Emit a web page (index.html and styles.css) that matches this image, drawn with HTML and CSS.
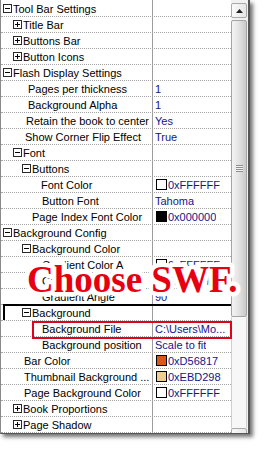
FILE: index.html
```html
<!DOCTYPE html>
<html>
<head>
<meta charset="utf-8">
<link rel="stylesheet" href="styles.css">
</head>
<body>
<div class="panel">
  <div class="grid">
    <div class="row"><div class="name l0"><svg class="box" width="9" height="9"><rect x=".5" y=".5" width="8" height="8"/><path d="M2 4.5h5"/></svg>Tool Bar Settings</div><div class="val"></div></div>
    <div class="row"><div class="name l1"><svg class="box" width="9" height="9"><rect x=".5" y=".5" width="8" height="8"/><path d="M2 4.5h5M4.5 2v5"/></svg>Title Bar</div><div class="val"></div></div>
    <div class="row"><div class="name l1"><svg class="box" width="9" height="9"><rect x=".5" y=".5" width="8" height="8"/><path d="M2 4.5h5M4.5 2v5"/></svg>Buttons Bar</div><div class="val"></div></div>
    <div class="row"><div class="name l1"><svg class="box" width="9" height="9"><rect x=".5" y=".5" width="8" height="8"/><path d="M2 4.5h5M4.5 2v5"/></svg>Button Icons</div><div class="val"></div></div>
    <div class="row"><div class="name l0"><svg class="box" width="9" height="9"><rect x=".5" y=".5" width="8" height="8"/><path d="M2 4.5h5"/></svg>Flash Display Settings</div><div class="val"></div></div>
    <div class="row"><div class="name t27">Pages per thickness</div><div class="val">1</div></div>
    <div class="row"><div class="name t27">Background Alpha</div><div class="val">1</div></div>
    <div class="row"><div class="name t25">Retain the book to center</div><div class="val">Yes</div></div>
    <div class="row"><div class="name t24">Show Corner Flip Effect</div><div class="val">True</div></div>
    <div class="row"><div class="name l1"><svg class="box" width="9" height="9"><rect x=".5" y=".5" width="8" height="8"/><path d="M2 4.5h5"/></svg>Font</div><div class="val"></div></div>
    <div class="row"><div class="name l2"><svg class="box" width="9" height="9"><rect x=".5" y=".5" width="8" height="8"/><path d="M2 4.5h5"/></svg>Buttons</div><div class="val"></div></div>
    <div class="row"><div class="name t40">Font Color</div><div class="val"><span class="sw white"></span>0xFFFFFF</div></div>
    <div class="row"><div class="name t41">Button Font</div><div class="val">Tahoma</div></div>
    <div class="row"><div class="name t31">Page Index Font Color</div><div class="val"><span class="sw black"></span>0x000000</div></div>
    <div class="row"><div class="name l0"><svg class="box" width="9" height="9"><rect x=".5" y=".5" width="8" height="8"/><path d="M2 4.5h5"/></svg>Background Config</div><div class="val"></div></div>
    <div class="row"><div class="name l2"><svg class="box" width="9" height="9"><rect x=".5" y=".5" width="8" height="8"/><path d="M2 4.5h5"/></svg>Background Color</div><div class="val"></div></div>
    <div class="row"><div class="name t41">Gradient Color A</div><div class="val"><span class="sw white"></span>0xFFFFFF</div></div>
    <div class="row"><div class="name t41">Gradient Color B</div><div class="val"><span class="sw white"></span>0xFFFFFF</div></div>
    <div class="row"><div class="name t41">Gradient Angle</div><div class="val">90</div></div>
    <div class="row sel"><div class="name l2"><svg class="box" width="9" height="9"><rect x=".5" y=".5" width="8" height="8"/><path d="M2 4.5h5"/></svg>Background</div><div class="val"></div></div>
    <div class="row"><div class="name t41">Background File</div><div class="val">C:\Users\Mo...</div></div>
    <div class="row"><div class="name t41">Background position</div><div class="val">Scale to fit</div></div>
    <div class="row"><div class="name t23">Bar Color</div><div class="val"><span class="sw orange"></span>0xD56817</div></div>
    <div class="row"><div class="name t23">Thumbnail Background ...</div><div class="val"><span class="sw tan"></span>0xEBD298</div></div>
    <div class="row"><div class="name t23">Page Background Color</div><div class="val"><span class="sw white"></span>0xFFFFFF</div></div>
    <div class="row"><div class="name l1"><svg class="box" width="9" height="9"><rect x=".5" y=".5" width="8" height="8"/><path d="M2 4.5h5M4.5 2v5"/></svg>Book Proportions</div><div class="val"></div></div>
    <div class="row"><div class="name l1"><svg class="box" width="9" height="9"><rect x=".5" y=".5" width="8" height="8"/><path d="M2 4.5h5M4.5 2v5"/></svg>Page Shadow</div><div class="val"></div></div>
  </div>
  <div class="sb">
    <div class="sb-btn up"><svg width="7" height="4"><path d="M0 4h7L3.5 0z"/></svg></div>
    <div class="sb-thumb"><span class="grip"></span></div>
    <div class="sb-track"></div>
    <div class="sb-btn down"></div>
  </div>
  <div class="gap"></div>
  <svg class="stamp" width="240" height="70" viewBox="0 0 240 70"><text x="27" y="52">Choose SWF.</text></svg>
  <div class="mark"></div>
</div>
</body>
</html>
```

FILE: styles.css
```css
html, body {
  margin: 0;
  padding: 0;
  background: #fff;
}
body {
  width: 272px;
  height: 457px;
  overflow: hidden;
}
.panel {
  position: relative;
  display: flex;
  width: 247px;
  height: 433px;
  border-left: 1px solid #8a8a8a;
  border-right: 2px solid #555;
  border-bottom: 1px solid #555;
  box-shadow: 3px 3px 4px rgba(0, 0, 0, 0.55);
  background: #fff;
  font-family: "Liberation Sans", Arial, sans-serif;
  font-size: 11px;
  letter-spacing: 0;
  color: #000;
}
.grid {
  width: 230px;
  height: 433px;
  overflow: hidden;
  padding-top: 1px;
  box-sizing: border-box;
  background: linear-gradient(to right, transparent 151px, #9c9c9c 151px, #9c9c9c 152px, transparent 152px) #fff;
}
.row {
  position: relative;
  display: flex;
  height: 15px;
  line-height: 14px;
  border-bottom: 1px dotted #a4a4a4;
}
.name {
  display: flex;
  align-items: center;
  width: 151px;
  flex: none;
  white-space: nowrap;
  overflow: hidden;
  box-sizing: border-box;
}
.val {
  display: flex;
  align-items: center;
  padding-left: 2px;
  margin-left: 1px;
  white-space: nowrap;
  overflow: hidden;
  color: #14148c;
}
.box {
  flex: none;
  margin-right: 1px;
  margin-top: -1px;
}
.box rect {
  fill: #fff;
  stroke: #2a2a2a;
}
.box path {
  stroke: #000;
  fill: none;
}
.l0 { padding-left: 2px; }
.l1 { padding-left: 12px; }
.l2 { padding-left: 21px; }
.t23 { padding-left: 23px; }
.t24 { padding-left: 24px; }
.t25 { padding-left: 25px; }
.t27 { padding-left: 27px; }
.t31 { padding-left: 31px; }
.t40 { padding-left: 40px; }
.t41 { padding-left: 41px; }

.sw {
  flex: none;
  width: 11px;
  height: 11px;
  box-sizing: border-box;
  border: 1px solid #000;
  margin-left: 1px;
  margin-right: 1px;
}
.sw.white { background: #fff; }
.sw.black { background: #000; }
.sw.orange { background: #d65a16; }
.sw.tan { background: #f0cd93; }

.sel::before {
  content: "";
  position: absolute;
  left: 2px;
  top: -1px;
  right: 0;
  height: 16px;
  border-top: 2px solid #000;
  border-left: 2px solid #000;
  box-sizing: border-box;
}

.sb {
  width: 16px;
  height: 433px;
  overflow: hidden;
  flex: none;
  display: flex;
  flex-direction: column;
  background: #f1f1f1;
  box-sizing: border-box;
  padding-top: 3px;
}
.sb-btn {
  flex: none;
  height: 16px;
  box-sizing: border-box;
  border: 1px solid #a9a9a9;
  border-radius: 2px;
  background: linear-gradient(to right, #fbfbfb, #e6e6e6);
  display: flex;
  align-items: center;
  justify-content: center;
}
.sb-btn.up { height: 15px; }
.sb-btn svg path { fill: #222; }
.sb-thumb {
  flex: none;
  margin-top: 2px;
  height: 297px;
  box-sizing: border-box;
  border: 1px solid #a4a4a4;
  border-radius: 2px;
  background: linear-gradient(to right, #f4f4f4 0%, #e4e4e4 45%, #c9c9c9 100%);
  display: flex;
  align-items: center;
  justify-content: center;
}
.grip {
  width: 7px;
  height: 7px;
  background: repeating-linear-gradient(to bottom, #8e8e8e 0, #8e8e8e 1px, #f4f4f4 1px, #f4f4f4 2px);
}
.sb-track {
  flex: none;
  height: 111px;
  box-shadow: inset 1px 0 #cfcfcf, inset -1px 0 #cfcfcf;
  background: #f7f7f7;
}
.gap {
  width: 1px;
  flex: none;
  background: #f0f0f0;
}

.stamp {
  position: absolute;
  left: -1px;
  top: 240px;
  overflow: visible;
}
.stamp text {
  font-family: "Liberation Serif", "Times New Roman", serif;
  font-weight: bold;
  font-size: 37px;
  letter-spacing: 0;
  fill: #e60012;
  stroke: #fff;
  stroke-width: 9px;
  stroke-linejoin: round;
  paint-order: stroke fill;
}
.mark {
  position: absolute;
  left: 31px;
  top: 321px;
  width: 200px;
  height: 18px;
  box-sizing: border-box;
  border: 2px solid #e3001b;
}
```
